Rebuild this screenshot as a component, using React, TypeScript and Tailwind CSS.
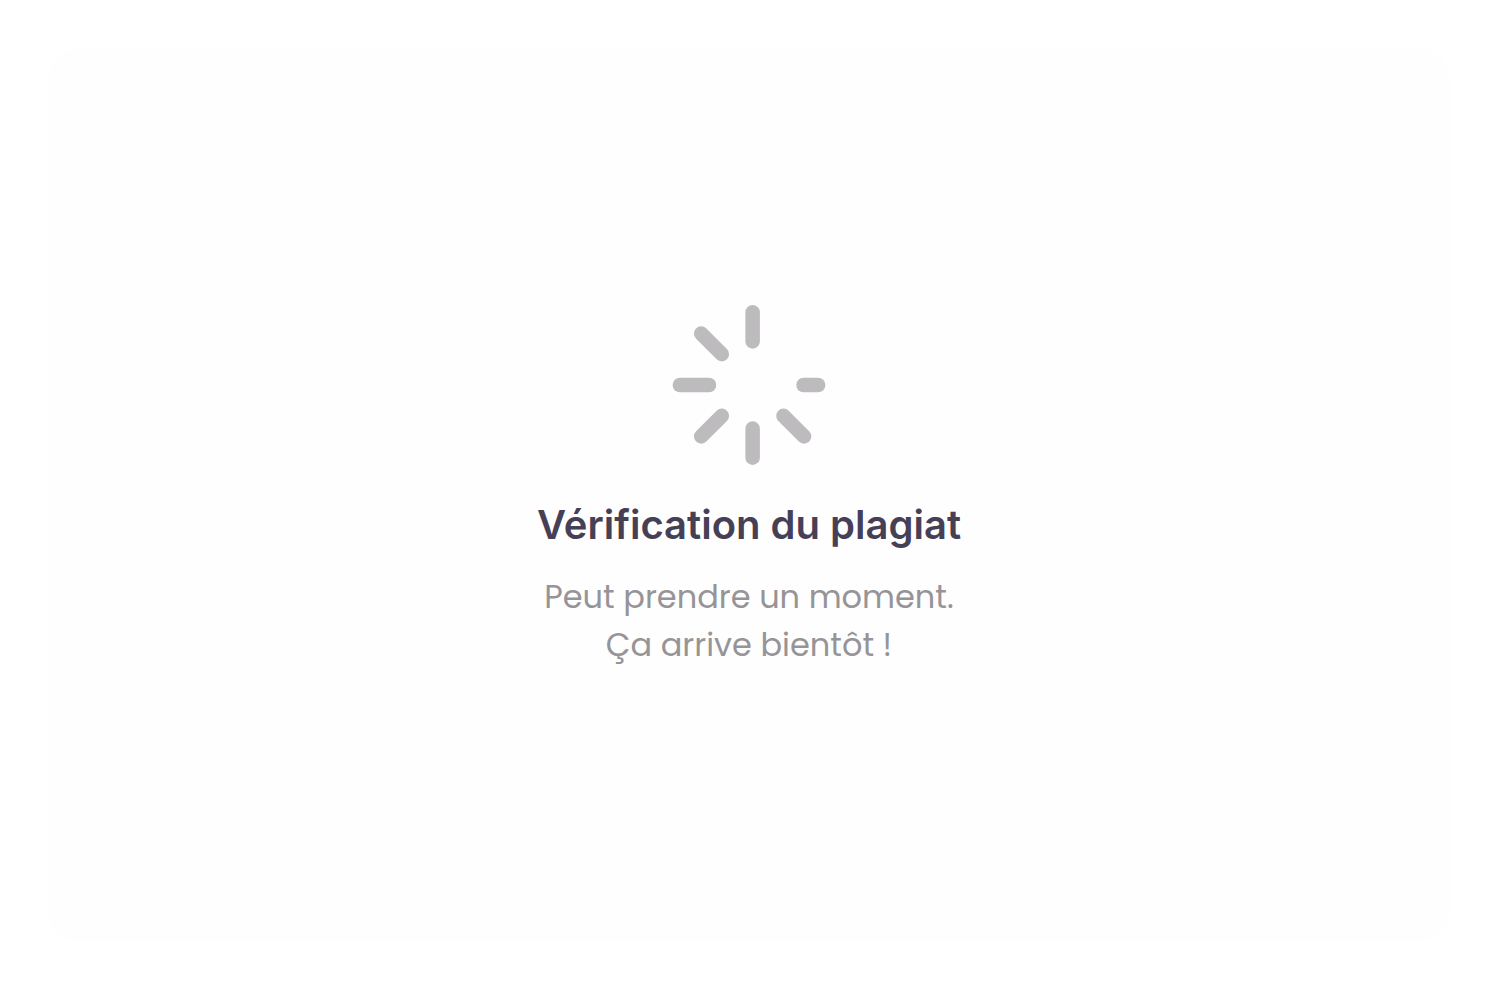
interface StatusMessageProps {
  title: string;
  lines: string[];
}

const Spinner = () => (
  <svg
    className="h-[160px] w-[154px]"
    viewBox="1 1 21 22"
    fill="none"
    stroke="#bdbbbe"
    strokeWidth="2"
    strokeLinecap="round"
    aria-hidden="true"
  >
    <path d="M12 2v4" />
    <path d="M19 12h2" />
    <path d="M16.24 16.24l2.83 2.83" />
    <path d="M12 18v4" />
    <path d="M4.93 19.07l2.83-2.83" />
    <path d="M2 12h4" />
    <path d="M4.93 4.93l2.83 2.83" />
  </svg>
);

const StatusMessage = ({ title, lines }: StatusMessageProps) => {
  return (
    <div role="status" className="flex flex-col items-center text-center">
      <Spinner />
      <h1 className="mt-9 font-['Inter',sans-serif] text-[40px] leading-12 font-semibold text-[#464057]">
        {title}
      </h1>
      <div className="mt-6 font-['Poppins','Inter',sans-serif] text-[32px] leading-12 text-[#969497]">
        {lines.map((line) => (
          <p key={line}>{line}</p>
        ))}
      </div>
    </div>
  );
};

const App = () => {
  return (
    <main className="flex min-h-screen bg-white p-12">
      {/* The card is only a shade darker than the page */}
      <section className="flex flex-1 items-center justify-center rounded-[32px] bg-[#fefefe] pb-4">
        <StatusMessage
          title="Vérification du plagiat"
          lines={["Peut prendre un moment.", "Ça arrive bientôt !"]}
        />
      </section>
    </main>
  );
};

export default App;
